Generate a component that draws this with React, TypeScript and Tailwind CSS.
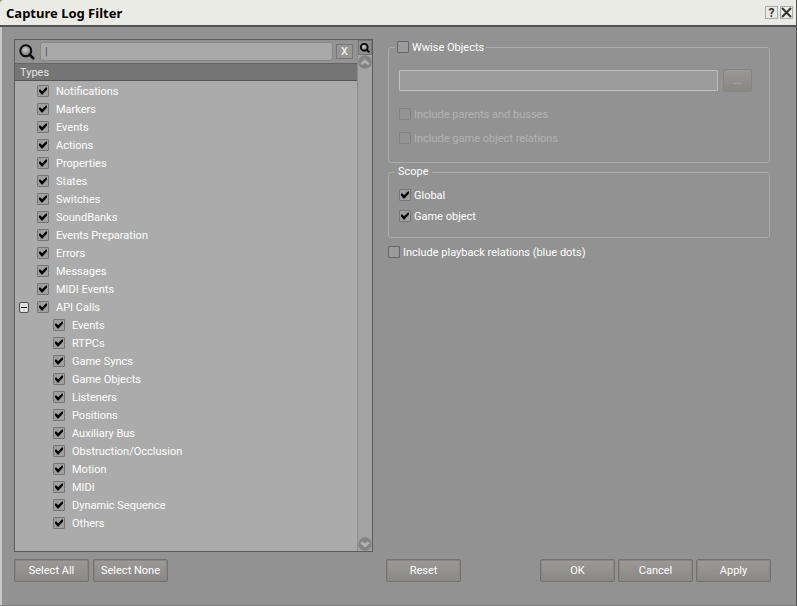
import { useState } from "react";
import type { ReactNode } from "react";

const topLevel = [
  "Notifications", "Markers", "Events", "Actions", "Properties", "States", "Switches",
  "SoundBanks", "Events Preparation", "Errors", "Messages", "MIDI Events",
];

const apiCalls = [
  "Events", "RTPCs", "Game Syncs", "Game Objects", "Listeners", "Positions", "Auxiliary Bus",
  "Obstruction/Occlusion", "Motion", "MIDI", "Dynamic Sequence", "Others",
];

type CheckProps = { label: string; checked?: boolean; disabled?: boolean; tree?: boolean };

function Check({ label, checked = false, disabled = false, tree = false }: CheckProps) {
  const [on, setOn] = useState(checked);
  const box = disabled
    ? "border-[#828282] bg-[#949494]"
    : on
      ? "border-[#757575] bg-[#a0a0a0]"
      : "border-[#666666] bg-[#9b9b9b]";
  return (
    <label className={`flex h-4 items-center ${tree ? "gap-[7px]" : "gap-[3px]"} ${disabled ? "text-[#b2b2b2]" : "text-white"}`}>
      <span className="grid h-3 w-3 shrink-0">
        <input
          type="checkbox"
          checked={on}
          disabled={disabled}
          onChange={(e) => setOn(e.target.checked)}
          className={`col-start-1 row-start-1 h-3 w-3 appearance-none rounded-[1px] border ${box}`}
        />
        {on && (
          <svg viewBox="0 0 12 12" className="pointer-events-none col-start-1 row-start-1 h-3 w-3" aria-hidden="true">
            <path d="M2 4.5 L3.5 4.5 L5 6.2 L9 2.5 L10 2.5 L10 4.5 L5.5 9.5 L4.5 9.5 L2 6.5 Z" fill="#000" />
          </svg>
        )}
      </span>
      <span className="pt-0.5 whitespace-nowrap">{label}</span>
    </label>
  );
}

function PushButton({ children }: { children: ReactNode }) {
  return (
    <button
      type="button"
      className="h-[23px] w-[75px] rounded-[2px] border border-[#727270] bg-linear-to-b from-[#9c9a97] to-[#898886] pt-px text-center text-white shadow-[inset_0_0_0_1px_#888785]"
    >
      {children}
    </button>
  );
}

function Magnifier({ className, small }: { className: string; small?: boolean }) {
  return (
    <svg viewBox="0 0 16 16" className={className} aria-hidden="true">
      <defs>
        <radialGradient id="lens" cx="0.45" cy="0.4" r="0.6">
          <stop offset="0" stopColor="#d0d0d0" />
          <stop offset="1" stopColor="#6c6c6c" />
        </radialGradient>
      </defs>
      <circle cx="6.8" cy="6.8" r="5.5" fill="url(#lens)" stroke="#0c0c0c" strokeWidth={small ? 3 : 2} />
      <path d="M10.6 10.6 L15 15" stroke="#0c0c0c" strokeWidth={small ? 3.5 : 2.5} />
    </svg>
  );
}

function ScrollArrow({ up }: { up?: boolean }) {
  return (
    <button type="button" aria-label={up ? "Scroll up" : "Scroll down"} className="h-[14px] w-[14px] shrink-0">
      <svg viewBox="0 0 14 14" className="h-[14px] w-[14px]" aria-hidden="true">
        <circle cx="7" cy="7" r="6.8" fill="#848484" />
        <path
          d={up ? "M2.5 8.5 L7 4 L11.5 8.5 L10 10 L7 7.7 L4 10 Z" : "M2.5 5.5 L4.5 4.5 L7 6.5 L9.5 4.5 L11.5 5.5 L11.5 6.5 L7 10.5 L2.5 6.5 Z"}
          fill="#b2b2b2"
        />
      </svg>
    </button>
  );
}

function Filters() {
  return (
    <section className="flex min-h-0 border border-[#5c5c5c] bg-[#ababab]">
      <div className="flex min-w-0 flex-1 flex-col">
        <div className="flex h-[23px] items-center bg-[#939393] pr-1 pl-1">
          <Magnifier className="h-4 w-4 shrink-0" />
          <input
            type="text"
            aria-label="Search types"
            placeholder="|"
            className="mr-[3px] ml-[5px] h-[19px] min-w-0 flex-1 rounded-[3px] border border-[#888888] bg-[#a8a8a8] px-1 text-white outline-none placeholder:text-[#555555]"
          />
          <button
            type="button"
            aria-label="Clear search"
            className="flex h-[15px] w-[17px] items-center justify-center border border-[#777777] bg-[#989795] leading-3 text-white"
          >
            X
          </button>
        </div>
        <div className="h-[18px] border-t border-b border-t-[#666666] border-b-[#555555] bg-[#757575] pt-px pl-[5px] leading-4 text-[#e4e4e4]">
          Types
        </div>
        <ul className="pt-px">
          {topLevel.map((name) => (
            <li key={name} className="flex h-[18px] items-center pl-[22px]">
              <Check label={name} checked tree />
            </li>
          ))}
          <li>
            <div className="flex h-[18px] items-center gap-2 pl-1">
              <button
                type="button"
                aria-label="Collapse API Calls"
                className="flex h-[11px] w-[10px] items-center justify-center rounded-[2px] border border-[#505050] bg-[#dddddd]"
              >
                <span className="h-px w-1.5 bg-black" />
              </button>
              <Check label="API Calls" checked tree />
            </div>
            <ul>
              {apiCalls.map((name) => (
                <li key={name} className="flex h-[18px] items-center pl-[38px]">
                  <Check label={name} checked tree />
                </li>
              ))}
            </ul>
          </li>
        </ul>
      </div>
      <div className="flex w-[15px] shrink-0 flex-col items-end border-l border-[#8c8c8c] bg-[#a3a3a3]">
        <button type="button" aria-label="Find" className="flex h-[15px] w-[14px] items-center justify-center border border-[#757575] bg-[#8f8f8f]">
          <Magnifier className="h-2.5 w-2.5" small />
        </button>
        <ScrollArrow up />
        <div className="flex-1" />
        <ScrollArrow />
      </div>
    </section>
  );
}

function Options() {
  return (
    <div className="flex flex-col">
      <fieldset className="h-[124px] min-w-0 rounded-[3px] border border-[#ababab] px-2.5">
        <legend className="-ml-1 px-0.5 leading-4">
          <Check label="Wwise Objects" />
        </legend>
        <div className="mt-3.5 flex items-center gap-[5px]">
          <input
            type="text"
            disabled
            aria-label="Wwise object"
            className="h-[21px] min-w-0 flex-1 rounded-[1px] border border-[#c0c0c0] bg-[#9c9c9c] px-1"
          />
          <button
            type="button"
            disabled
            aria-label="Browse"
            className="mr-[7px] flex h-[23px] w-[29px] items-center justify-center rounded-[2px] border border-[#858585] bg-linear-to-b from-[#999896] to-[#888784] text-[#b8b8b8]"
          >
            ...
          </button>
        </div>
        <div className="mt-3.5 flex flex-col gap-2">
          <Check label="Include parents and busses" disabled />
          <Check label="Include game object relations" disabled />
        </div>
      </fieldset>
      <fieldset className="mt-px h-[74px] min-w-0 rounded-[3px] border border-[#ababab] px-2.5">
        <legend className="-ml-1 px-[3px] leading-4">Scope</legend>
        <div className="mt-[7px] flex flex-col gap-[5px]">
          <Check label="Global" checked />
          <Check label="Game object" checked />
        </div>
      </fieldset>
      <div className="mt-1.5">
        <Check label="Include playback relations (blue dots)" />
      </div>
    </div>
  );
}

export default function App() {
  return (
    <main className="flex min-h-screen flex-col border-r border-b border-r-[#505050] border-b-[#808080] bg-[#929292] font-['Roboto',sans-serif] text-[11px] leading-4 text-white">
      <header className="flex h-[27px] items-center justify-between rounded-tl border-b-2 border-[#505050] bg-[#ebebe6] pr-[3px] pl-1.5 text-black">
        <h1 className="font-['Noto_Sans',sans-serif] text-[13px] font-bold">Capture Log Filter</h1>
        <div className="flex gap-0.5 text-[#333333]">
          <button type="button" aria-label="Help" className="flex h-[13px] w-[13px] items-center justify-center border border-[#aaaaaa] text-xs leading-3 font-bold">
            ?
          </button>
          <button type="button" aria-label="Close" className="flex h-[13px] w-[13px] items-center justify-center border border-[#aaaaaa]">
            <svg viewBox="0 0 11 11" className="h-[11px] w-[11px]" aria-hidden="true">
              <path d="M1 1 L10 10 M10 1 L1 10" stroke="#333333" strokeWidth="2" />
            </svg>
          </button>
        </div>
      </header>
      <div className="flex flex-1 flex-col border-l-2 border-[#c8c8c8] pt-3 pb-[23px] pl-3">
        <div className="grid flex-1 grid-cols-[359fr_382fr] gap-[15px] pr-[26px]">
          <Filters />
          <Options />
        </div>
        <footer className="mt-[7px] grid grid-cols-[359fr_385fr] gap-[13px] pr-[25px]">
          <div className="flex gap-1">
            <PushButton>Select All</PushButton>
            <PushButton>Select None</PushButton>
          </div>
          <div className="flex justify-between">
            <PushButton>Reset</PushButton>
            <div className="flex gap-[3px]">
              <PushButton>OK</PushButton>
              <PushButton>Cancel</PushButton>
              <PushButton>Apply</PushButton>
            </div>
          </div>
        </footer>
      </div>
    </main>
  );
}
